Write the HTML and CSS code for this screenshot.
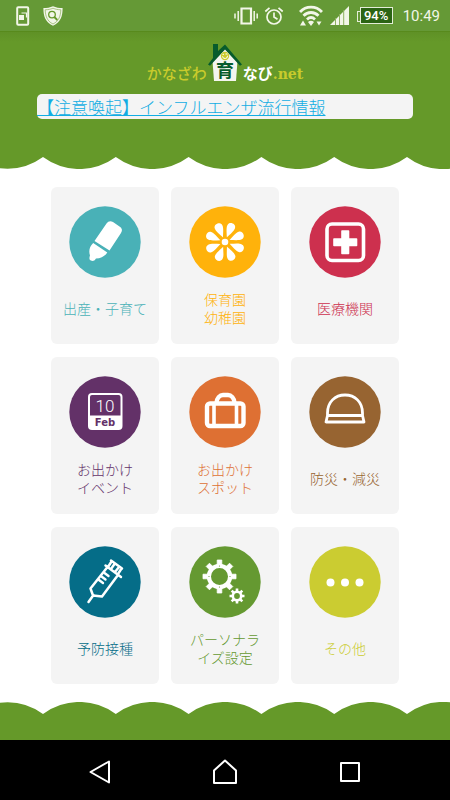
FILE: index.html
```html
<!DOCTYPE html>
<html lang="ja">
<head>
<meta charset="utf-8">
<meta name="viewport" content="width=device-width, initial-scale=1">
<title>かなざわ育なび.net</title>
<link rel="stylesheet" href="styles.css">
</head>
<body>
<div class="status">
  <div class="status-group status-left">
    <svg width="14" height="22" viewBox="0 0 14 22"><rect x="1.2" y="2.2" width="11" height="17.6" rx="1" fill="none" stroke="#f2f6e8" stroke-width="2"/><path d="M5.500 8h5v4.500" fill="none" stroke="#f2f6e8" stroke-width="1.2"/><path d="M3 10h5v5H3z" fill="#f2f6e8"/></svg>
    <svg width="22" height="22" viewBox="0 0 22 22"><path d="M11 1.2C8 2.6 5 3 1.4 3 1.4 11 3 17 11 20.8 19 17 20.6 11 20.6 3 17 3 14 2.6 11 1.2z" fill="#f2f6e8"/><path d="M11 3.2C8.500 4.300 6 4.700 3.200 4.800 3.400 11 5 16 11 19 17 16 18.600 11 18.800 4.800 16 4.700 13.500 4.300 11 3.200z" fill="none" stroke="#8aad58" stroke-width=".7"/><circle cx="10" cy="9.600" r="3.300" fill="none" stroke="#659929" stroke-width="1.300"/><path d="M12.300 12l3 3" stroke="#659929" stroke-width="1.800"/></svg>
  </div>
  <div class="status-group">
    <svg class="vibrate" width="24" height="20" viewBox="0 0 24 20"><path d="M7.500 2.500h9.500v15H7.500z" fill="none" stroke="#f2f6e8" stroke-width="2.200"/><path d="M4.200 5v10M1 7.500v5M20.200 5v10M23.200 7.500v5" stroke="#f2f6e8" stroke-width="1.500"/></svg>
    <svg class="alarm" width="20" height="20" viewBox="0 0 20 20"><circle cx="10" cy="11" r="7" fill="none" stroke="#f2f6e8" stroke-width="1.700"/><path d="M10 6.500V11l3.500 2.200M1.300 5.500l4.200-3.700M18.700 5.500l-4.200-3.700" fill="none" stroke="#f2f6e8" stroke-width="1.700"/></svg>
    <svg class="wifi" width="24" height="22" viewBox="0 0 24 22"><g fill="none" stroke="#f2f6e8" stroke-width="2.800"><path d="M1 7c6-6.500 16-6.500 22 0"/><path d="M4.500 10.800c4.300-4.400 10.700-4.400 15 0"/><path d="M8 14.400c2.500-2.400 5.500-2.400 8 0"/></g><path d="M9 17c2-1.700 4-1.700 6 0l-3 4zM1 20.500l3-5 3 5zM17.500 16.500h5l-2.500 4z" fill="#f2f6e8"/></svg>
    <svg class="signal" width="20" height="20" viewBox="0 0 20 20"><path d="M0 19L19 0v19z" fill="#f2f6e8"/><path d="M5.500 12v7M9.500 8v11M13.700 4v15" stroke="#8db160" stroke-width="1"/></svg>
    <span class="battery">94%</span>
    <time class="clock">10:49</time>
  </div>
</div>

<header class="header">
  <h1 class="logo">
    <span class="logo-name">かなざわ</span>
    <svg class="house" width="36" height="40" viewBox="0 0 36 40"><path d="M5.500 18L18 5l12.500 13-1.500 20H7z" fill="#f4f5ef"/><path d="M6 1h5v7l7-6.500L35 21.500l-2 1.300L18 6.500 3 22.800 1 21.500 6 15z" fill="#075c2c"/><circle cx="18" cy="13" r="4.200" fill="#c9cb2c"/><path d="M15.500 13.300a2.500 2.500 0 0 0 5-.6M15.500 11.300h1.500M18.500 11h2" stroke="#fff" stroke-width="1" fill="none"/><text class="house-text" x="18" y="34" text-anchor="middle">育</text></svg>
    <span class="logo-navi">なび</span><span class="logo-net">.net</span>
  </h1>
  <div class="notice"><a href="#">【注意喚起】インフルエンザ流行情報</a></div>
</header>
<svg class="scallop" viewBox="0 0 450 12" preserveAspectRatio="none"><path d="M0 0H450V11.700A61 61 0 0 1 407 0A61 61 0 0 1 334.200 0A61 61 0 0 1 261.400 0A61 61 0 0 1 188.600 0A61 61 0 0 1 115.800 0A61 61 0 0 1 43 0A61 61 0 0 1 0 11.300z" fill="#659929"/></svg>

<main class="menu">
  <a class="card teal" href="#">
    <svg class="icon" viewBox="0 0 72 72"><circle cx="36" cy="36" r="35.700" fill="#49b1b7"/><path d="M37.500 17.500Q40 14 44 16L50.500 20.500Q54.500 23 52 27L40.500 44.500 25.500 35z" fill="#fff"/><path d="M24.200 37L38.300 46.500C36 50 32 52.500 27 52.500Q25.500 56 21.800 54.500 19.500 53.500 21 49.500C19.500 45 20.500 40.500 24.200 37z" fill="#fff"/></svg>
    <span class="label">出産・子育て</span>
  </a>
  <a class="card yellow" href="#">
    <svg class="icon" viewBox="0 0 72 72"><circle cx="36" cy="36" r="35.700" fill="#ffb20b"/><g fill="#fff"><circle cx="36" cy="36" r="3.300"/>
      <path id="petal" d="M36 31C34.300 27 31.600 22.500 31.900 19.500 32.200 14.800 39.800 14.800 40.100 19.500 40.400 22.500 37.700 27 36 31z" transform="rotate(22 36 36)"/>
      <use href="#petal" transform="rotate(45 36 36)"/><use href="#petal" transform="rotate(90 36 36)"/><use href="#petal" transform="rotate(135 36 36)"/><use href="#petal" transform="rotate(180 36 36)"/><use href="#petal" transform="rotate(225 36 36)"/><use href="#petal" transform="rotate(270 36 36)"/><use href="#petal" transform="rotate(315 36 36)"/></g></svg>
    <span class="label">保育園<br>幼稚園</span>
  </a>
  <a class="card red" href="#">
    <svg class="icon" viewBox="0 0 72 72"><circle cx="36" cy="36" r="35.700" fill="#cd304e"/><rect x="18" y="18" width="36.500" height="36.500" rx="5" fill="none" stroke="#fff" stroke-width="3.600"/><path d="M33 25h6.500v8H47.500v6.500H39.500v8H33v-8H25V33h8z" fill="#fff" stroke="#fff" stroke-width="1.600" stroke-linejoin="round"/></svg>
    <span class="label">医療機関</span>
  </a>
  <a class="card purple" href="#">
    <svg class="icon" viewBox="0 0 72 72"><circle cx="36" cy="36" r="35.700" fill="#633168"/><rect x="19" y="17" width="34.500" height="37" rx="4" fill="#fff"/><path d="M21 21Q21 19 23 19H49.500Q51.500 19 51.500 21V39.500H21z" fill="#633168"/><text class="cal-day" x="36" y="36" text-anchor="middle">10</text><text class="cal-month" x="36" y="50" text-anchor="middle">Feb</text></svg>
    <span class="label">お出かけ<br>イベント</span>
  </a>
  <a class="card orange" href="#">
    <svg class="icon" viewBox="0 0 72 72"><circle cx="36" cy="36" r="35.700" fill="#de7033"/><g fill="none" stroke="#fff" stroke-width="4.400"><rect x="18" y="27.500" width="36.500" height="22.500" rx="3"/><path d="M25 28v22M47.500 28v22" stroke-width="3.600"/><path d="M27.500 27C27.500 22 31 19 34 19h5C42 19 45.500 22 45.500 27"/></g></svg>
    <span class="label">お出かけ<br>スポット</span>
  </a>
  <a class="card brown" href="#">
    <svg class="icon" viewBox="0 0 72 72"><circle cx="36" cy="36" r="35.700" fill="#976431"/><path d="M18.500 39.500V37C18.500 26 26 19 36 19S53.500 26 53.500 37v2.500M18.500 39.500h35M18.500 39.500L17 46h38l-1.500-6.500" fill="none" stroke="#fff" stroke-width="2.800" stroke-linejoin="round"/></svg>
    <span class="label">防災・減災</span>
  </a>
  <a class="card blue" href="#">
    <svg class="icon" viewBox="0 0 72 72"><circle cx="36" cy="36" r="35.700" fill="#056d88"/><g fill="none" stroke="#fff" stroke-width="2.500" stroke-linecap="round" stroke-linejoin="round"><path d="M36.500 19.500L52 31M49 29L33 50.500 24 49.500 21.500 42.500 38.500 21M24.500 49L19.500 56M42 14.500L53 22.500M42.500 15.500L39 21M52.500 22.500L49 28M45.500 18L42 23M50 21L46 26"/><path d="M35.500 27l4 3M32.500 30.500l4 3M30 34l4 3" stroke-width="2.400"/></g></svg>
    <span class="label">予防接種</span>
  </a>
  <a class="card green" href="#">
    <svg class="icon" viewBox="0 0 72 72"><circle cx="36" cy="36" r="35.700" fill="#659931"/>
      <g fill="#fff"><circle cx="30.500" cy="30.500" r="10.600" fill="none" stroke="#fff" stroke-width="4.200"/>
      <path id="tooth" d="M28.200 19.500V14h4.600v5.500z" stroke="#fff" stroke-width=".8" stroke-linejoin="round"/>
      <use href="#tooth" transform="rotate(45 30.500 30.500)"/><use href="#tooth" transform="rotate(90 30.500 30.500)"/><use href="#tooth" transform="rotate(135 30.500 30.500)"/><use href="#tooth" transform="rotate(180 30.500 30.500)"/><use href="#tooth" transform="rotate(225 30.500 30.500)"/><use href="#tooth" transform="rotate(270 30.500 30.500)"/><use href="#tooth" transform="rotate(315 30.500 30.500)"/>
      <circle cx="48" cy="50" r="4.200" fill="none" stroke="#fff" stroke-width="2.600"/>
      <path d="M48 42.500v15M40.500 50h15M42.700 44.700l10.600 10.600M53.300 44.700L42.700 55.300" stroke="#fff" stroke-width="2.600"/><circle cx="48" cy="50" r="2.900" fill="#659931"/></g>
      <g fill="#659931"><circle cx="30.500" cy="20" r=".6"/><circle cx="41" cy="30.500" r=".6"/><circle cx="30.500" cy="41" r=".6"/><circle cx="20" cy="30.500" r=".6"/></g></svg>
    <span class="label">パーソナラ<br>イズ設定</span>
  </a>
  <a class="card lime" href="#">
    <svg class="icon" viewBox="0 0 72 72"><circle cx="36" cy="36" r="35.700" fill="#cbcc31"/><g fill="#fff"><circle cx="21.500" cy="36.500" r="4"/><circle cx="36" cy="36.500" r="4"/><circle cx="50.500" cy="36.500" r="4"/></g></svg>
    <span class="label">その他</span>
  </a>
</main>

<svg class="scallop" viewBox="0 0 450 12" preserveAspectRatio="none"><path d="M0 12H450V.300A61 61 0 0 0 407 12A61 61 0 0 0 334.200 12A61 61 0 0 0 261.400 12A61 61 0 0 0 188.600 12A61 61 0 0 0 115.800 12A61 61 0 0 0 43 12A61 61 0 0 0 0 .700z" fill="#659929"/></svg>
<div class="ground"></div>
<nav class="navbar">
  <button type="button" aria-label="戻る"><svg width="26" height="26" viewBox="0 0 26 26"><path d="M3.500 13L22 2.500v21z"/></svg></button>
  <button type="button" aria-label="ホーム"><svg width="26" height="26" viewBox="0 0 26 26"><path d="M2 24V11.500L13 1.500l11 10V24z"/></svg></button>
  <button type="button" aria-label="履歴"><svg width="26" height="26" viewBox="0 0 26 26"><path d="M4 4h18v18H4z"/></svg></button>
</nav>
</body>
</html>
```

FILE: styles.css
```css
* {
  box-sizing: border-box;
}

body {
  margin: 0;
  min-height: 100vh;
  display: flex;
  flex-direction: column;
  background: #fff;
  font-family: "Noto Sans CJK JP", sans-serif;
}

svg {
  display: block;
  flex: none;
}

.status {
  height: 31px;
  padding: 0 10px 0 16px;
  display: flex;
  align-items: center;
  justify-content: space-between;
  background: #659936;
}

.status-group {
  display: flex;
  align-items: center;
}

.status-left {
  gap: 12px;
}

.vibrate {
  margin-right: 6px;
}

.alarm {
  margin-right: 15px;
}

.wifi {
  margin-right: 7px;
}

.signal {
  margin-right: 10px;
}

.battery {
  position: relative;
  width: 33px;
  height: 17px;
  margin-right: 10px;
  border: 1px solid #e4edd8;
  background: #2b6414;
  color: #fff;
  font: 500 13px/15px Roboto, sans-serif;
  text-align: center;
}

.battery::before {
  content: "";
  position: absolute;
  left: -4px;
  top: 3px;
  width: 3px;
  height: 9px;
  border: 1px solid #e4edd8;
  border-right: 0;
}

.clock {
  color: #f2f6e8;
  font: 400 15px/20px Roboto, sans-serif;
}

.header {
  padding: 11px 37px 38px;
  border-top: 1px solid #588a1c;
  background: linear-gradient(#5f9126, #659929 10px);
}

.logo {
  height: 40px;
  margin: 0 0 11px;
  display: flex;
  align-items: flex-end;
  justify-content: center;
  line-height: 20px;
}

.logo-name {
  color: #c9cb2c;
  font-size: 15px;
  font-weight: 500;
}

.logo-navi {
  color: #fff;
  font-size: 15px;
  font-weight: 700;
}

.logo-net {
  color: #c9cb2c;
  font: 700 14px/18px "DejaVu Serif", serif;
}

.house-text {
  fill: #075c2c;
  font-size: 18px;
  font-weight: 700;
}

.notice {
  height: 25px;
  border-radius: 5px;
  background: #f4f4f4;
  font-size: 17px;
  line-height: 25px;
  font-weight: 300;
  white-space: nowrap;
}

.notice a {
  color: #12ade3;
  text-decoration: underline;
}

.scallop {
  width: 100%;
  height: 12px;
}

.menu {
  flex: 1;
  width: 100%;
  max-width: 600px;
  margin: 0 auto;
  padding: 18px 51px;
  display: grid;
  grid-template-columns: repeat(3, 1fr);
  gap: 13px 12px;
}

.card {
  min-height: 157px;
  padding: 19px 0 17px;
  display: flex;
  flex-direction: column;
  align-items: center;
  gap: 12px;
  border-radius: 6px;
  background: #f4f4f4;
  text-decoration: none;
}

.icon {
  width: 72px;
  height: 72px;
}

.label {
  min-height: 36px;
  display: flex;
  align-items: center;
  font-size: 14px;
  line-height: 18px;
  font-weight: 300;
  text-align: center;
}

.teal { color: #49b1b7; }
.yellow { color: #ffb20b; }
.red { color: #cd304e; }
.purple { color: #633168; }
.orange { color: #de7033; }
.brown { color: #976431; }
.blue { color: #056d88; }
.green { color: #659931; }
.lime { color: #cbcc31; }

.cal-day {
  fill: #fff;
  font: 300 17px Roboto, sans-serif;
}

.cal-month {
  fill: #633168;
  font: 700 10px "DejaVu Sans", sans-serif;
}

.ground {
  height: 26px;
  background: #659929;
}

.navbar {
  height: 60px;
  padding: 4px 37px 0;
  display: grid;
  grid-template-columns: repeat(3, 1fr);
  align-items: center;
  background: #000;
}

.navbar button {
  padding: 0;
  display: flex;
  justify-content: center;
  border: 0;
  background: none;
}

.navbar path {
  fill: none;
  stroke: #fff;
  stroke-width: 2;
  stroke-linejoin: round;
}
```
